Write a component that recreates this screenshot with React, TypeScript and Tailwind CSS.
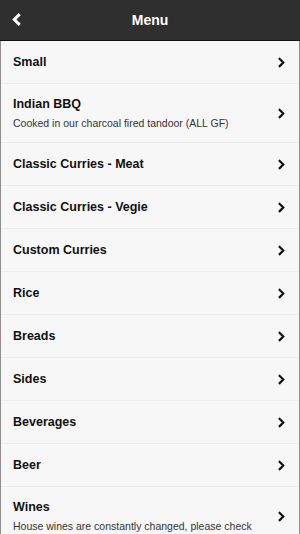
const items: { title: string; sub?: string }[] = [
  { title: "Small" },
  { title: "Indian BBQ", sub: "Cooked in our charcoal fired tandoor (ALL GF)" },
  { title: "Classic Curries - Meat" },
  { title: "Classic Curries - Vegie" },
  { title: "Custom Curries" },
  { title: "Rice" },
  { title: "Breads" },
  { title: "Sides" },
  { title: "Beverages" },
  { title: "Beer" },
  { title: "Wines", sub: "House wines are constantly changed, please check" },
];

function Chevron({ className = "" }: { className?: string }) {
  return (
    <svg viewBox="0 0 10 12" className={className} fill="none" stroke="currentColor" strokeWidth="2.4" strokeLinecap="square" strokeLinejoin="miter">
      <path d="M3 2l4 4-4 4" />
    </svg>
  );
}

export default function App() {
  return (
    <div className="h-[534px] w-[300px] overflow-hidden bg-[#f7f7f7] font-['Liberation_Sans',Arial,sans-serif]">
      <header className="relative flex h-[41px] items-center justify-center border-b border-[#111] bg-[#2f2f2f]">
        <button className="absolute left-[11px] top-[13px] text-white">
          <svg viewBox="0 0 10 12" className="h-[13px] w-[11px]" fill="none" stroke="currentColor" strokeWidth="2.8" strokeLinecap="square">
            <path d="M7 2L3 6l4 4" />
          </svg>
        </button>
        <h1 className="text-[14px] font-bold text-white">Menu</h1>
      </header>
      <ul className="border-x border-[#8e8e8e]">
        {items.map((it) => (
          <li
            key={it.title}
            className={`flex items-center border-b border-[#ececec] pl-[12px] pr-[13px] ${it.sub ? "h-[59px]" : "h-[43px]"}`}
          >
            <div className="flex-1">
              <div className="text-[12.5px] font-bold leading-[16px] text-[#111]">{it.title}</div>
              {it.sub && <div className="mt-[5px] text-[10.5px] leading-[13px] text-[#333]">{it.sub}</div>}
            </div>
            <Chevron className="h-[11px] w-[9px] text-[#111]" />
          </li>
        ))}
      </ul>
    </div>
  );
}
